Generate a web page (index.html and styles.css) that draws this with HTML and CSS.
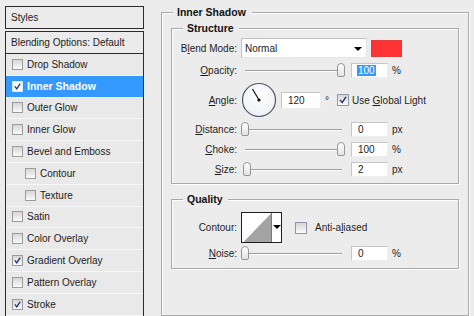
FILE: index.html
```html
<!DOCTYPE html>
<html>
<head>
<meta charset="utf-8">
<link rel="stylesheet" href="styles.css">
</head>
<body>
<div class="page">
  <div class="sidebar">
    <div class="hbox">Styles</div>
    <div class="hbox">Blending Options: Default</div>
    <ul class="list">
      <li><span class="cb"></span>Drop Shadow</li>
      <li class="sel"><span class="cb on"><svg viewBox="0 0 11 11"><polyline points="2.2,5.4 4.6,8.4 8.8,2"/></svg></span>Inner Shadow</li>
      <li><span class="cb"></span>Outer Glow</li>
      <li><span class="cb"></span>Inner Glow</li>
      <li><span class="cb"></span>Bevel and Emboss</li>
      <li class="sub"><span class="cb"></span>Contour</li>
      <li class="sub"><span class="cb"></span>Texture</li>
      <li><span class="cb"></span>Satin</li>
      <li><span class="cb"></span>Color Overlay</li>
      <li><span class="cb on"><svg viewBox="0 0 11 11"><polyline points="2.2,5.4 4.6,8.4 8.8,2"/></svg></span>Gradient Overlay</li>
      <li><span class="cb"></span>Pattern Overlay</li>
      <li><span class="cb on"><svg viewBox="0 0 11 11"><polyline points="2.2,5.4 4.6,8.4 8.8,2"/></svg></span>Stroke</li>
    </ul>
  </div>

  <fieldset class="outer">
    <legend>Inner Shadow</legend>

    <fieldset class="grp structure">
      <legend>Structure</legend>
      <div class="frow r22">
        <span class="lbl">B<u>l</u>end Mode:</span>
        <div class="select"><span>Normal</span><span class="arrow"></span></div>
        <span class="swatch"></span>
      </div>
      <div class="frow r22">
        <span class="lbl"><u>O</u>pacity:</span>
        <div class="slider"><span class="thumb" style="left:96px"></span></div>
        <span class="num"><span class="hl">100</span></span>
        <span class="unit">%</span>
      </div>
      <div class="frow r38">
        <span class="lbl"><u>A</u>ngle:</span>
        <svg class="dial" viewBox="0 0 36 36" width="36" height="36">
          <defs>
            <radialGradient id="dg" cx="50%" cy="40%" r="60%">
              <stop offset="0" stop-color="#ffffff"/>
              <stop offset="1" stop-color="#eef0f4"/>
            </radialGradient>
          </defs>
          <circle cx="18" cy="18" r="16.5" fill="url(#dg)" stroke="#4e5668" stroke-width="1.2"/>
          <line x1="18" y1="18" x2="11.5" y2="7" stroke="#000" stroke-width="1.1"/>
          <circle cx="18" cy="18" r="1.6" fill="#000"/>
        </svg>
        <span class="num wide">120</span>
        <span class="deg">°</span>
        <span class="cb big on"><svg viewBox="0 0 11 11"><polyline points="2.2,5.4 4.6,8.4 8.8,2"/></svg></span>
        <span class="cbl">Use <u>G</u>lobal Light</span>
      </div>
      <div class="frow r20">
        <span class="lbl"><u>D</u>istance:</span>
        <div class="slider"><span class="thumb" style="left:0px"></span></div>
        <span class="num">0</span>
        <span class="unit">px</span>
      </div>
      <div class="frow r20">
        <span class="lbl"><u>C</u>hoke:</span>
        <div class="slider"><span class="thumb" style="left:96px"></span></div>
        <span class="num">100</span>
        <span class="unit">%</span>
      </div>
      <div class="frow r20">
        <span class="lbl"><u>S</u>ize:</span>
        <div class="slider"><span class="thumb" style="left:2px"></span></div>
        <span class="num">2</span>
        <span class="unit">px</span>
      </div>
    </fieldset>

    <fieldset class="grp quality">
      <legend>Quality</legend>
      <div class="frow r31">
        <span class="lbl">Contour:</span>
        <div class="contour">
          <svg class="curve" viewBox="0 0 29 29" width="29" height="29">
            <rect width="29" height="29" fill="#fff"/>
            <polygon points="1.5,29 29,0.5 29,29" fill="#a3a3a3"/>
          </svg>
          <span class="carrow"><span class="arrow"></span></span>
        </div>
        <span class="cb big qcb"></span>
        <span class="cbl aa">Anti-a<u>l</u>iased</span>
      </div>
      <div class="frow r20">
        <span class="lbl"><u>N</u>oise:</span>
        <div class="slider"><span class="thumb" style="left:0px"></span></div>
        <span class="num">0</span>
        <span class="unit">%</span>
      </div>
    </fieldset>
  </fieldset>
</div>
</body>
</html>
```

FILE: styles.css
```css
* { box-sizing: border-box; }
html, body { margin: 0; padding: 0; }
body {
  background: #ececec;
  font-family: "Liberation Sans", Arial, sans-serif;
  font-size: 10px;
  color: #1c1c1c;
  width: 474px;
  height: 316px;
  overflow: hidden;
}
.page {
  display: flex;
  align-items: flex-start;
  padding: 6px 0 0 5px;
}

/* ---------- left styles list ---------- */
.sidebar { width: 139px; flex: none; }
.hbox {
  height: 23px;
  border: 1px solid #2b2b2b;
  padding-left: 5px;
  line-height: 21px;
  background: #ebebeb;
}
.hbox + .hbox { margin-top: 2px; }
.list {
  list-style: none;
  margin: 0;
  padding: 0;
  border-left: 1px solid #2b2b2b;
  border-right: 1px solid #2b2b2b;
  height: 262px;
  overflow: hidden;
}
.list li {
  height: 21.8px;
  display: flex;
  align-items: center;
  padding-left: 6px;
  background: #e9e9e9;
  border-bottom: 1px solid #f7f7f7;
  white-space: nowrap;
}
.list li.sub { padding-left: 19px; }
.list li.sel {
  background: #3399ff;
  color: #fff;
  font-weight: bold;
  font-size: 10.5px;
}

.cb {
  flex: none;
  width: 11px;
  height: 11px;
  border: 1px solid #9c9c9c;
  background: linear-gradient(#d6d6d6, #fbfbfb);
  margin-right: 4px;
  display: inline-flex;
}
.cb svg { width: 100%; height: 100%; }
.cb polyline { fill: none; stroke: #1d3470; stroke-width: 1.6; }
.sel .cb { background: #fff; border-color: #cfe3ff; }
.cb.big { width: 12px; height: 12px; border-color: #8f97a8; }

/* ---------- right options ---------- */
fieldset {
  margin: 0;
  min-width: 0;
  border: 1px solid #a9a9a9;
  box-shadow: 1px 1px 0 #fff, inset 1px 1px 0 #fff;
}
legend {
  font-weight: bold;
  font-size: 10.5px;
  line-height: 13px;
  color: #111;
  background: #ececec;
}
.outer {
  margin-left: 17px;
  width: 308px;
  height: 310px;
  padding: 3px 9px 0 9px;
}
.outer > legend { margin-left: 2px; padding: 0 6px 0 4px; }
.grp { width: 288px; padding: 2px 0 4px 0; }
.grp > legend { margin-left: 11px; padding: 0 5px 0 4px; }
.quality { margin-top: 9px; padding: 6px 0 5px 0; }

.frow { display: flex; align-items: center; white-space: nowrap; }
.r22 { height: 22px; }
.r38 { height: 38px; }
.r20 { height: 20px; }
.r31 { height: 31px; align-items: flex-start; }
.r31 > .lbl, .r31 > .qcb, .r31 > .cbl { align-self: center; }

.lbl {
  flex: none;
  width: 65px;
  text-align: right;
  margin-right: 4px;
  color: #1c1c1c;
}
u { text-decoration-thickness: 1px; text-underline-offset: 1px; }

.select {
  flex: none;
  width: 126px;
  height: 20px;
  background: #fff;
  border: 1px solid;
  border-color: #c2c2c2 #e6e6e6 #e6e6e6 #c2c2c2;
  display: flex;
  align-items: center;
  padding-left: 3px;
}
.arrow {
  width: 0;
  height: 0;
  border-left: 4px solid transparent;
  border-right: 4px solid transparent;
  border-top: 4px solid #000;
}
.select .arrow { margin-left: auto; margin-right: 4px; margin-top: 2px; }
.swatch {
  flex: none;
  width: 31px;
  height: 17px;
  margin-left: 4px;
  background: #ff3333;
  border: 1px solid #e43a3a;
}

.slider {
  flex: none;
  position: relative;
  width: 105px;
  height: 16px;
}
.slider::before {
  content: "";
  position: absolute;
  left: 4px;
  right: 4px;
  top: 8px;
  height: 1px;
  background: #9d9d9d;
  box-shadow: 0 1px 0 #fff;
}
.thumb {
  position: absolute;
  top: 1px;
  width: 8px;
  height: 14px;
  border: 1px solid #959595;
  border-radius: 4px 4px 2px 2px;
  background: linear-gradient(#ffffff, #e2e2e2);
}

.num {
  flex: none;
  width: 37px;
  height: 15px;
  margin-left: 5px;
  background: #fff;
  border: 1px solid;
  border-color: #c6c6c6 #efefef #efefef #c6c6c6;
  padding-left: 6px;
  line-height: 13px;
}
.num.wide { width: 40px; margin-left: 4px; height: 17px; line-height: 15px; }
.hl { background: #3399ff; color: #fff; padding: 0 1px; margin-left: -1px; }
.unit { margin-left: 4px; }

.dial { flex: none; display: block; }
.deg { margin-left: 4px; }
.r38 .cb { margin-left: 8px; margin-right: 3px; }

.contour {
  flex: none;
  display: flex;
  width: 41px;
  height: 31px;
  border: 1px solid #1e1e1e;
  background: #fff;
}
.curve { display: block; }
.carrow {
  flex: 1;
  display: flex;
  justify-content: center;
  padding-top: 12px;
  border-left: 1px solid #777;
}
.qcb { margin-left: 13px; margin-right: 0; }
.aa { margin-left: 8px; }
```
